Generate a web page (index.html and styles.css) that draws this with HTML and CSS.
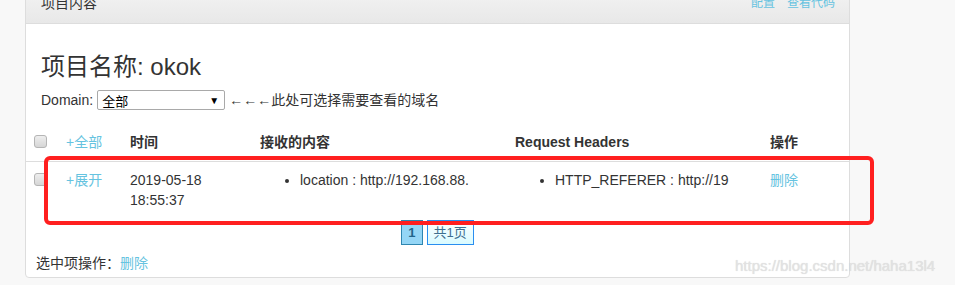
FILE: index.html
```html
<!DOCTYPE html>
<html lang="zh-CN">
<head>
  <meta charset="UTF-8">
  <title>项目内容</title>
  <link rel="stylesheet" href="styles.css">
</head>
<body>
<div class="panel">
  <div class="panel-heading">
    <span>项目内容</span>
    <span class="links"><a href="#">配置</a><a href="#">查看代码</a></span>
  </div>

  <div class="panel-body">
    <h3 class="title">项目名称: okok</h3>

    <div class="domain">
      Domain:
      <span class="select-wrap">
        <select class="domain-select">
          <option>全部</option>
        </select>
      </span>
      <span class="hint">←←←此处可选择需要查看的域名</span>
    </div>

    <table class="list">
      <colgroup>
        <col style="width:32px">
        <col style="width:64px">
        <col style="width:130px">
        <col style="width:255px">
        <col style="width:255px">
        <col>
      </colgroup>
      <thead>
        <tr>
          <th><input type="checkbox" class="cb"></th>
          <th><a href="#" class="plain">+全部</a></th>
          <th>时间</th>
          <th>接收的内容</th>
          <th>Request Headers</th>
          <th>操作</th>
        </tr>
      </thead>
      <tbody>
        <tr>
          <td><input type="checkbox" class="cb"></td>
          <td><a href="#">+展开</a></td>
          <td>2019-05-18<br>18:55:37</td>
          <td><ul><li>location : http://192.168.88.</li></ul></td>
          <td><ul><li>HTTP_REFERER : http://19</li></ul></td>
          <td><a href="#">删除</a></td>
        </tr>
      </tbody>
    </table>

    <div class="pager">
      <span class="page current">1</span>
      <span class="page total">共1页</span>
    </div>

    <div class="batch">选中项操作：<a href="#">删除</a></div>
  </div>
</div>

<!-- annotation drawn over the screenshot -->
<div class="mark"></div>
<div class="watermark">https://blog.csdn.net/haha13l4</div>
</body>
</html>
```

FILE: styles.css
```css
body {
  margin: 0;
  padding-left: 25px;
  background-color: #f8f8f8;
  font-family: "Liberation Sans", Arial, "Noto Sans CJK SC", sans-serif;
  font-size: 14px;
  line-height: 20px;
  color: #333;
  overflow: hidden;
}

a {
  color: #66c3e0;
  text-decoration: none;
}

.panel {
  width: 823px;
  margin-top: -18px;
  background: #fff;
  border: 1px solid #ddd;
  border-radius: 4px;
}

.panel-heading {
  display: flex;
  justify-content: space-between;
  align-items: center;
  height: 40px;
  padding: 0 14px 0 15px;
  background: linear-gradient(#f5f5f5, #e8e8e8);
  border-bottom: 1px solid #ddd;
  border-radius: 4px 4px 0 0;
}

.links {
  display: flex;
  gap: 12px;
  font-size: 12px;
}

.panel-body {
  padding: 10px 0 4px;
}

.title {
  margin: 20px 0 10px;
  padding-left: 15px;
  font-size: 24px;
  font-weight: normal;
  line-height: 26.4px;
}

.domain {
  display: flex;
  align-items: center;
  height: 20px;
  padding-left: 15px;
}

.select-wrap {
  position: relative;
  margin-left: 4px;
}

.select-wrap::after {
  content: "▼";
  position: absolute;
  right: 6px;
  top: 1px;
  font-size: 10px;
  color: #000;
  pointer-events: none;
}

.domain-select {
  appearance: none;
  -webkit-appearance: none;
  width: 128px;
  height: 20px;
  padding: 0 4px;
  border: 1px solid #a9a9a9;
  border-radius: 2px;
  background: #fff;
  font-family: "Noto Sans CJK SC", sans-serif;
  font-size: 13px;
  color: #000;
}

.hint {
  margin-left: 4px;
}

.list {
  width: 100%;
  margin-top: 14px;
  border-collapse: collapse;
  table-layout: fixed;
}

.list th,
.list td {
  padding: 8px;
  text-align: left;
  vertical-align: top;
}

.list th {
  border-bottom: 1px solid #ddd;
}

.list ul {
  margin: 0;
  padding-left: 40px;
}

.cb {
  appearance: none;
  -webkit-appearance: none;
  width: 13px;
  height: 13px;
  margin: 3px 0 0 0;
  border: 1px solid #b5b5b5;
  border-radius: 3px;
  background: linear-gradient(#eee, #d6d6d6);
}

.plain {
  font-weight: normal;
}

.pager {
  display: flex;
  justify-content: center;
  gap: 4px;
  margin-top: 2px;
}

.page {
  height: 23px;
  line-height: 23px;
  padding: 0 6px;
  font-size: 13px;
}

.current {
  border: 1px solid #2f86b0;
  background: #94d6f6;
  color: #21658a;
  font-weight: bold;
}

.total {
  border: 1px solid #2a8ef0;
  background: linear-gradient(#fff, #d9fbff);
  color: #3f6f8f;
}

.batch {
  margin-top: 8px;
  padding-left: 10px;
}

.mark {
  position: absolute;
  left: 44px;
  top: 156px;
  width: 822px;
  height: 61px;
  border: 4px solid #ff1f1f;
  border-radius: 6px;
}

.watermark {
  position: absolute;
  left: 735px;
  top: 256px;
  font-size: 15px;
  color: #e2e2e2;
  text-shadow: 0 0 1px rgba(0, 0, 0, 0.15);
}
```
